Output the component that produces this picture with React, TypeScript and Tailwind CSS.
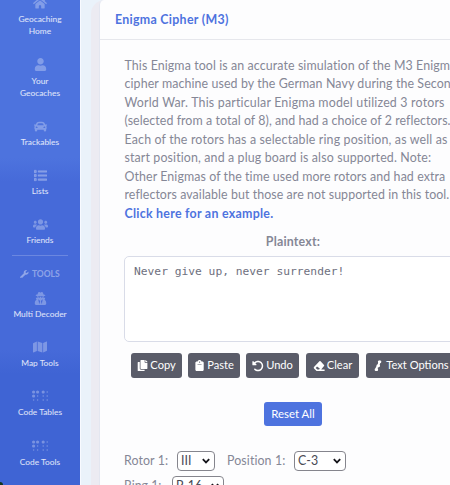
import React from 'react';
import {
  FaBraille,
  FaCar,
  FaCopy,
  FaHome,
  FaList,
  FaMap,
  FaUser,
  FaUserSecret,
  FaUsers,
  FaWrench,
} from 'react-icons/fa';
import { FaClipboard, FaRotateLeft } from 'react-icons/fa6';

interface NavItemProps {
  icon: React.ReactNode;
  lines: string[];
}

function NavItem({ icon, lines }: NavItemProps) {
  return (
    <a className={`flex shrink-0 flex-col items-center pt-[10px] ${lines.length > 1 ? 'h-[61.5px]' : 'h-[49.2px]'}`}>
      <span className="flex h-3 items-center text-[13px] text-white/30">{icon}</span>
      <span className="mt-[4px] flex flex-col items-center text-[8.4px] leading-[12.3px] text-white/85">
        {lines.map((line) => (
          <span key={line} className="whitespace-nowrap">{line}</span>
        ))}
      </span>
    </a>
  );
}

function Sidebar() {
  return (
    <nav className="relative flex h-full w-20 shrink-0 flex-col overflow-hidden bg-[linear-gradient(180deg,#4d73de_0,#4d73de_158px,#466ad9_182px,#466ad9_350px,#3f64d4_374px)]">
      <div className="-mt-[13px] flex h-[268px] shrink-0 flex-col">
        <NavItem icon={<FaHome className="text-[14px]" />} lines={['Geocaching', 'Home']} />
        <NavItem icon={<FaUser />} lines={['Your', 'Geocaches']} />
        <NavItem icon={<FaCar />} lines={['Trackables']} />
        <NavItem icon={<FaList strokeWidth={20} stroke="currentColor" />} lines={['Lists']} />
        <NavItem icon={<FaUsers className="text-[15px]" />} lines={['Friends']} />
      </div>
      <hr className="mx-3 shrink-0 border-white/20" />
      <div className="flex h-[26px] shrink-0 items-end justify-center gap-[3px] pb-[2px] text-[8.5px] leading-[12px] font-bold text-white/40">
        <FaWrench className="mb-[2px]" />
        TOOLS
      </div>
      <NavItem icon={<FaUserSecret />} lines={['Multi Decoder']} />
      <NavItem icon={<FaMap className="text-[14px]" />} lines={['Map Tools']} />
      <NavItem icon={<FaBraille className="text-[16px]" />} lines={['Code Tables']} />
      <NavItem icon={<FaBraille className="text-[16px]" />} lines={['Code Tools']} />
      <span className="absolute bottom-0 left-0 h-[3px] w-[3px] rounded-tr-full bg-[#12361f]" />
    </nav>
  );
}

function EraserIcon() {
  return (
    <svg viewBox="0 0 12 12" className="h-3 w-3" fill="currentColor">
      <path d="M6.4 1.2Q7 .7 7.6 1.2L11 4.9Q11.5 5.5 11 6.1L8.2 9.4H11.6V11H3.6L1 8.4Q.4 7.7 1 7ZM4 6.6 2.7 8 4.3 9.4H6.1L6.8 8.6Z" fillRule="evenodd" />
    </svg>
  );
}

function TextOptionsIcon() {
  return (
    <svg viewBox="0 0 10 12" className="mr-px h-3 w-[10px]" fill="none" stroke="currentColor" strokeLinecap="round">
      <path d="M6.6 1.8 5.4 5.2M5.6 5.6 3.8 7.4M3.7 7.8 3.4 10" strokeWidth="2" />
      <path d="M6.2 1.8h.8M4.8 5.8h.9M3 9.7h.8" strokeWidth="2.7" />
    </svg>
  );
}

interface ToolButtonProps {
  className: string;
  icon: React.ReactNode;
  children: React.ReactNode;
}

function ToolButton({ className, icon, children }: ToolButtonProps) {
  return (
    <button
      className={`flex h-[25px] shrink-0 items-center justify-center gap-[2px] rounded-[3px] bg-[#5a5c69] pt-px text-[11.1px] whitespace-nowrap text-white ${className}`}
    >
      {icon}
      {children}
    </button>
  );
}

function SelectBox({ className, value }: { className: string; value: string }) {
  return (
    <div
      className={`flex h-5 shrink-0 items-center justify-between rounded-[4px] border border-[#85858d] bg-white pt-px pr-[4px] pl-[3px] text-[12.4px] text-[#484954] ${className}`}
    >
      {value}
      <svg viewBox="0 0 8 6" className="h-[6px] w-2" fill="none" stroke="#15151b" strokeWidth="1.8">
        <path d="M.8 1.2 4 4.4 7.2 1.2" />
      </svg>
    </div>
  );
}

const intro = [
  { text: 'This Enigma tool is an accurate simulation of the M3 Enigma', tracking: 'tracking-[0.1px]' },
  { text: 'cipher machine used by the German Navy during the Second', tracking: 'tracking-[0.1px]' },
  { text: 'World War. This particular Enigma model utilized 3 rotors', tracking: 'tracking-[0.19px]' },
  { text: '(selected from a total of 8), and had a choice of 2 reflectors.', tracking: 'tracking-[0.07px]' },
  { text: 'Each of the rotors has a selectable ring position, as well as', tracking: 'tracking-[0.16px]' },
  { text: 'start position, and a plug board is also supported. Note:', tracking: 'tracking-[0.13px]' },
  { text: 'Other Enigmas of the time used more rotors and had extra', tracking: 'tracking-[0.09px]' },
  { text: 'reflectors available but those are not supported in this tool.', tracking: 'tracking-[0.07px]' },
];

export default function App() {
  return (
    <div className="flex h-[485px] w-[450px] overflow-hidden bg-[#eaf2fa] font-['Lato','Open_Sans',sans-serif]">
      <Sidebar />
      <div className="flex min-w-0 flex-1 border-l border-[#f8faff]">
        <div className="ml-[10px] flex w-full rounded-tl-[14px] bg-[#ecebf2] pl-2">
          <main className="flex w-full min-w-0 flex-col overflow-hidden rounded-tl-[5px] border-l border-[#e3e6f0] bg-[#fdfdfe]">
            <header className="flex h-10 shrink-0 items-center border-b border-[#e6e7ec] pt-px pl-[15px] text-[12.4px] font-bold tracking-[0.29px] text-[#4e73df]">
              Enigma Cipher (M3)
            </header>
            <div className="flex flex-col pl-6 text-[12.4px] text-[#858796]">
              <div className="mt-[16.5px] ml-[0.5px] flex flex-col leading-[18.5px] whitespace-nowrap">
                {intro.map((line) => (
                  <span key={line.text} className={line.tracking}>{line.text}</span>
                ))}
                <a className="font-bold tracking-[0.26px] text-[#4e73df]">Click here for an example.</a>
              </div>
              <label className="mt-[10px] w-[338px] text-center leading-[18.5px] font-bold tracking-[0.2px]">Plaintext:</label>
              <div className="mt-[4px] h-[86px] w-[360px] rounded-[5px] border border-[#d9dce8] bg-white px-[9px] pt-[6px] font-['DejaVu_Sans_Mono',monospace] text-[11.27px] leading-[18.5px] text-[#6e707e]">
                Never give up, never surrender!
              </div>
              <div className="mt-[11px] ml-[7px] flex">
                <ToolButton className="w-[51px]" icon={<FaCopy />}>Copy</ToolButton>
                <ToolButton className="ml-[6px] w-[52px]" icon={<FaClipboard />}>Paste</ToolButton>
                <ToolButton className="ml-[6px] w-[53px]" icon={<FaRotateLeft className="text-[12px]" />}>Undo</ToolButton>
                <ToolButton className="ml-[7px] w-[53px]" icon={<EraserIcon />}>Clear</ToolButton>
                <ToolButton className="ml-[7px] w-[90px]" icon={<TextOptionsIcon />}>Text Options</ToolButton>
              </div>
              <button className="mt-6 ml-[140px] h-6 w-[58px] rounded-[3px] bg-[#4e73df] pt-px text-[11.4px] text-white">
                Reset All
              </button>
              <div className="mt-[25px] flex h-5 items-center whitespace-nowrap">
                <span className="w-[53px] pt-[2px] tracking-[0.1px]">Rotor 1:</span>
                <SelectBox className="w-[38px]" value="III" />
                <span className="ml-3 w-[67px] pt-[2px] tracking-[0.1px]">Position 1:</span>
                <SelectBox className="w-[52px]" value="C-3" />
              </div>
              <div className="mt-[5px] flex h-5 items-center whitespace-nowrap">
                <span className="w-12 pt-[2px]">Ring 1:</span>
                <SelectBox className="w-[52px]" value="P-16" />
              </div>
            </div>
          </main>
        </div>
      </div>
    </div>
  );
}
